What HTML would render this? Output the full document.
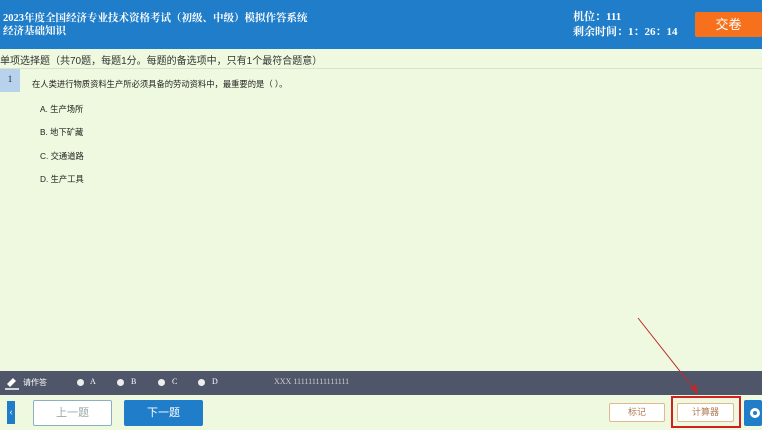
<!DOCTYPE html>
<html><head><meta charset="utf-8"><style>
*{margin:0;padding:0;box-sizing:border-box}
body{width:762px;height:430px;overflow:hidden;background:#eef9df;font-family:"Liberation Serif","Noto Serif CJK SC",serif;position:relative;color:#222}
.abs{position:absolute}
.hd{left:0;top:0;width:762px;height:49px;background:#1f7dc9;color:#fff;font-weight:bold;font-size:10.5px}
.sans{font-family:"Liberation Sans","Noto Sans CJK SC",sans-serif}
</style></head><body>
<div class="abs hd">
 <div class="abs" style="left:3px;top:12px;line-height:13px">2023年度全国经济专业技术资格考试（初级、中级）模拟作答系统<br>经济基础知识</div>
 <div class="abs" style="left:573px;top:10px;line-height:15px;font-size:11px">机位：111<br>剩余时间：1：26：14</div>
 <div class="abs sans" style="left:695px;top:12px;width:67px;height:25px;background:#f7711c;border-radius:2px;text-align:center;line-height:25px;font-size:13px;font-weight:normal">交卷</div>
</div>
<div class="abs sans" style="left:0;top:52px;font-size:10px;color:#333">单项选择题（共70题，每题1分。每题的备选项中，只有1个最符合题意）</div>
<div class="abs" style="left:0;top:68px;width:762px;height:1px;background:#d6e2cc"></div>
<div class="abs" style="left:0;top:69px;width:20px;height:23px;background:#b8d2ee;font-size:9px;text-align:center;line-height:20px">1</div>
<div class="abs sans" style="left:32px;top:78px;font-size:8.3px">在人类进行物质资料生产所必须具备的劳动资料中，最重要的是（ ）。</div>
<div class="abs sans" style="left:40px;top:98px;font-size:8.3px;line-height:23.3px">A. 生产场所<br>B. 地下矿藏<br>C. 交通道路<br>D. 生产工具</div>
<div class="abs" style="left:0;top:371px;width:762px;height:24px;background:#50566a;color:#fff;font-size:8px">
 <svg class="abs" style="left:4px;top:4px" width="16" height="16" viewBox="0 0 16 16"><path d="M3 9 L9 3 L12 6 L6 12 Z" fill="#fff"/><path d="M1 14 H15" stroke="#fff" stroke-width="1.5"/></svg>
 <span class="abs sans" style="left:23px;top:6px">请作答</span>
 <span class="abs" style="left:77px;top:8px;width:7px;height:7px;border-radius:50%;background:#eee"></span><span class="abs" style="left:90px;top:6px">A</span>
 <span class="abs" style="left:117px;top:8px;width:7px;height:7px;border-radius:50%;background:#eee"></span><span class="abs" style="left:131px;top:6px">B</span>
 <span class="abs" style="left:158px;top:8px;width:7px;height:7px;border-radius:50%;background:#eee"></span><span class="abs" style="left:172px;top:6px">C</span>
 <span class="abs" style="left:198px;top:8px;width:7px;height:7px;border-radius:50%;background:#eee"></span><span class="abs" style="left:212px;top:6px">D</span>
 <span class="abs" style="left:274px;top:6px;color:#ccc">XXX 111111111111111</span>
</div>
<div class="abs" style="left:7px;top:401px;width:8px;height:23px;background:#1f7dc9;color:#fff;font-size:10px;line-height:23px;text-align:center">‹</div>
<div class="abs sans" style="left:33px;top:400px;width:79px;height:26px;background:#fff;border:1px solid #8ab0c8;border-radius:2px;text-align:center;line-height:24px;font-size:11px;color:#9aa">上一题</div>
<div class="abs sans" style="left:124px;top:400px;width:79px;height:26px;background:#1f7dc9;border-radius:2px;text-align:center;line-height:26px;font-size:11px;color:#fff">下一题</div>
<div class="abs sans" style="left:609px;top:403px;width:56px;height:19px;background:#fff;border:1px solid #e2b88c;border-radius:2px;text-align:center;line-height:17px;font-size:9px;color:#b07a50">标记</div>
<div class="abs" style="left:671px;top:396px;width:70px;height:32px;border:2px solid #d21f1f"></div>
<div class="abs sans" style="left:677px;top:403px;width:57px;height:19px;background:#fff;border:1px solid #e2b88c;border-radius:2px;text-align:center;line-height:17px;font-size:9px;color:#b07a50">计算器</div>
<div class="abs" style="left:744px;top:400px;width:18px;height:26px;background:#1f7dc9;border-radius:2px"><span class="abs" style="left:6px;top:8px;width:10px;height:10px;border-radius:50%;border:3px solid #fff"></span></div>
<svg class="abs" style="left:0;top:0" width="762" height="430"><line x1="638" y1="318" x2="694" y2="389" stroke="#c0282a" stroke-width="1"/><path d="M698 394 L690 388 L696 384 Z" fill="#c0282a"/></svg>
</body></html>
